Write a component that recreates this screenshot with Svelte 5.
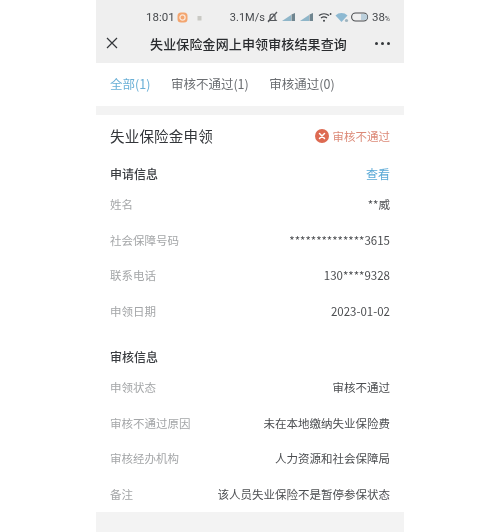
<script>
  const applyRows = [
    ['姓名', '**威'],
    ['社会保障号码', '**************3615'],
    ['联系电话', '130****9328'],
    ['申领日期', '2023-01-02']
  ];
  const reviewRows = [
    ['申领状态', '审核不通过'],
    ['审核不通过原因', '未在本地缴纳失业保险费'],
    ['审核经办机构', '人力资源和社会保障局'],
    ['备注', '该人员失业保险不是暂停参保状态']
  ];
</script>

<div class="page">
  <div class="phone">
    <header class="head">
      <div class="status">
        <div class="status-left">
          <span>18:01</span>
          <svg class="notif" width="11" height="11" viewBox="0 0 11 11"><rect x="0.5" y="0.5" width="10" height="10" rx="3.5" fill="#f3a56f"/><circle cx="5.5" cy="5.5" r="2.6" fill="none" stroke="#fbe6d6" stroke-width="1.3"/></svg>
          <svg class="lock" width="5" height="7" viewBox="0 0 5 7"><rect x="0.5" y="2" width="4" height="4.5" fill="#c9c9c4"/></svg>
        </div>
        <div class="status-right">
          <span class="speed">3.1M/s</span>
          <svg class="ic-bell" width="13" height="12" viewBox="0 0 13 12" fill="none" stroke="#55585c" stroke-width="1.2"><path d="M4 8.5V5.5a2.5 2.5 0 0 1 5 0v3l1 1H3z"/><path d="M2 11 11 1"/></svg>
          <svg width="15" height="10" viewBox="0 0 15 10"><path d="M1 9 10 3v6z" fill="#8fb6c9"/><path d="M10.5 2.6 14 1v8h-3.5z" fill="#6f858f"/></svg>
          <svg width="15" height="10" viewBox="0 0 15 10"><path d="M1 9 10 3v6z" fill="#8fb6c9"/><path d="M10.5 2.6 14 1v8h-3.5z" fill="#6f858f"/></svg>
          <svg class="ic-wifi" width="14" height="11" viewBox="0 0 14 11" fill="none" stroke="#3f4347" stroke-width="1.3"><path d="M1 3.6a8 8 0 0 1 10 0M3 6a5 5 0 0 1 6 0"/><circle cx="6" cy="8.8" r="1" fill="#3f4347" stroke="none"/><circle cx="12.6" cy="2" r="0.9" fill="#3f4347" stroke="none"/></svg>
          <svg width="14" height="11" viewBox="0 0 14 11"><path d="M0.5 3.6a8.5 8.5 0 0 1 12 0L6.5 10z" fill="#8db9d2"/><circle cx="11.5" cy="8.5" r="1.6" fill="#9fb4bf"/></svg>
          <svg width="18" height="10" viewBox="0 0 18 10"><rect x="0.6" y="1" width="16" height="8" rx="4" fill="none" stroke="#4a4d50" stroke-width="1.1"/><path d="M10 2h3.4a3 3 0 0 1 0 6H10z" fill="#bcd0dc"/></svg>
          <span class="batt">38<small>%</small></span>
        </div>
      </div>
      <div class="nav">
        <svg class="close" width="12" height="12" viewBox="0 0 12 12" fill="none" stroke="#33363a" stroke-width="1.2"><path d="M1 1l10 10M11 1 1 11"/></svg>
        <div class="nav-title">失业保险金网上申领审核结果查询</div>
        <div class="more"><i></i><i></i><i></i></div>
      </div>
    </header>

    <nav class="tabs">
      <span class="tab active">全部(1)</span>
      <span class="tab">审核不通过(1)</span>
      <span class="tab">审核通过(0)</span>
    </nav>

    <main class="card">
      <div class="card-head">
        <h1>失业保险金申领</h1>
        <div class="badge">
          <svg width="14" height="14" viewBox="0 0 14 14"><circle cx="7" cy="7" r="7" fill="#dd6a52"/><path d="M4.5 4.5l5 5M9.5 4.5l-5 5" stroke="#fff" stroke-width="1.5" stroke-linecap="round"/></svg>
          <span>审核不通过</span>
        </div>
      </div>

      <div class="sec first">
        <h2>申请信息</h2>
        <span class="link">查看</span>
      </div>
      {#each applyRows as [k, v]}
        <div class="row"><span class="k">{k}</span><span class="v">{v}</span></div>
      {/each}

      <div class="sec second"><h2>审核信息</h2></div>
      {#each reviewRows as [k, v]}
        <div class="row"><span class="k">{k}</span><span class="v">{v}</span></div>
      {/each}
    </main>
    <div class="foot"></div>
  </div>
</div>

<style>
  :global(body) {
    margin: 0;
    background: #fff;
  }
  .page {
    width: 500px;
    height: 532px;
    display: flex;
    justify-content: center;
    overflow: hidden;
    font-family: "Noto Sans CJK SC", "Noto Sans", sans-serif;
  }
  .phone {
    width: 308px;
    display: flex;
    flex-direction: column;
    background: #f3f3f3;
    filter: blur(0.35px);
  }
  .head {
    height: 63px;
    background: #efefef;
    box-sizing: border-box;
    padding: 8px 14px 0 10px;
    display: flex;
    flex-direction: column;
  }
  .status {
    height: 18px;
    display: flex;
    justify-content: space-between;
    align-items: center;
    padding-left: 40px;
    font-family: "Roboto", "Noto Sans", sans-serif;
    font-size: 11.5px;
    color: #46494d;
  }
  .status-left, .status-right {
    display: flex;
    align-items: center;
  }
  .status-left span { margin-right: 2px; }
  .lock { margin-left: 9px; }
  .status-right { gap: 2.5px; }
  .speed { font-size: 11px; margin-right: -1.5px; }
  .ic-wifi { margin-left: 2px; }
  .batt small { font-size: 7px; }
  .nav {
    height: 28px;
    margin-top: 3px;
    display: flex;
    align-items: center;
  }
  .close { flex: none; }
  .nav-title {
    flex: 1;
    text-align: center;
    font-size: 13px;
    font-weight: 500;
    letter-spacing: 0.12px;
    padding-left: 4px;
    color: #2a2c2f;
    white-space: nowrap;
  }
  .more {
    display: flex;
    gap: 3px;
    flex: none;
  }
  .more i {
    width: 3px;
    height: 3px;
    border-radius: 50%;
    background: #33363a;
  }
  .tabs {
    height: 43px;
    box-sizing: border-box;
    padding: 0 0 2px 14px;
    background: #fff;
    display: flex;
    align-items: center;
    font-size: 12.5px;
    color: #6b6e72;
    margin-bottom: 9px;
  }
  .tab { margin-right: 20.5px; white-space: nowrap; }
  .tab.active { color: #69afd6; }
  .card {
    height: 397px;
    background: #fff;
    box-sizing: border-box;
    padding: 0 14px;
    flex: none;
  }
  .card-head {
    height: 42px;
    display: flex;
    justify-content: space-between;
    align-items: center;
  }
  h1 {
    margin: 0 0 2px;
    font-size: 14.5px;
    font-weight: 400;
    color: #33363a;
    letter-spacing: 0.2px;
  }
  .badge {
    display: flex;
    align-items: center;
    gap: 4px;
    font-size: 11.5px;
    color: #dc8a78;
  }
  .badge svg { flex: none; }
  .sec {
    display: flex;
    justify-content: space-between;
    align-items: center;
    height: 24px;
  }
  .sec.first { margin-top: 4px; margin-bottom: 1px; }
  .sec.second { margin-top: 16px; }
  h2 {
    margin: 0;
    font-size: 12px;
    font-weight: 500;
    color: #3b3e42;
  }
  .link {
    font-size: 12px;
    color: #5aa9d6;
  }
  .row {
    height: 35.6px;
    display: flex;
    justify-content: space-between;
    align-items: center;
    font-size: 11.5px;
    white-space: nowrap;
  }
  .sec + .row { height: 36px; }
  .k { color: #a4a6a8; }
  .v { color: #4c4e51; }
  .foot { flex: 1; background: #f3f3f3; }
</style>
